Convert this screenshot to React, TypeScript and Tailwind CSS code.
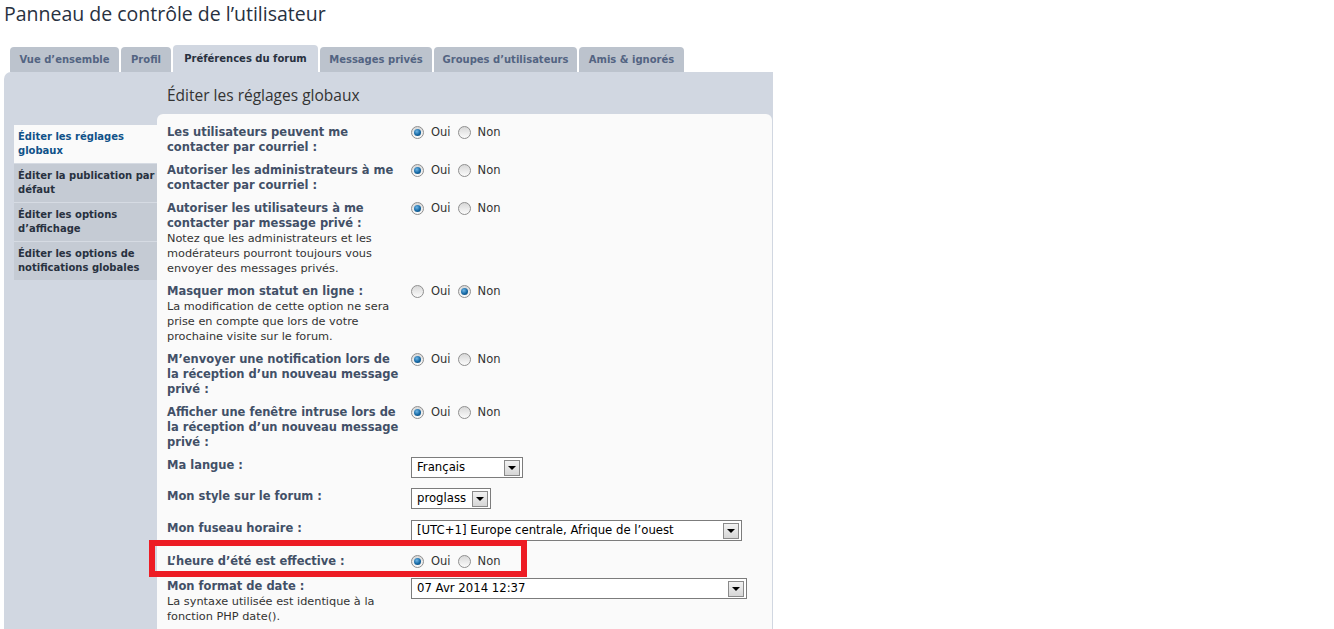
import React from "react";

const tabs = [
	{ label: "Vue d’ensemble", w: "w-[109px]" },
	{ label: "Profil", w: "w-[50px]" },
	{ label: "Préférences du forum", w: "w-[145px]", active: true },
	{ label: "Messages privés", w: "w-[112px]" },
	{ label: "Groupes d’utilisateurs", w: "w-[143px]" },
	{ label: "Amis & ignorés", w: "w-[105px]" },
];

const menu = [
	{ label: "Éditer les réglages globaux", active: true },
	{ label: "Éditer la publication par défaut" },
	{ label: "Éditer les options d’affichage" },
	{ label: "Éditer les options de notifications globales" },
];

type RadioRow = { kind: "radio"; label: string; explain?: string; yes: boolean };
type SelectRow = { kind: "select"; label: string; explain?: string; value: string; w: string; h: string; lpt: string; spt: string };
type Row = RadioRow | SelectRow;

const rows: Row[] = [
	{ kind: "radio", label: "Les utilisateurs peuvent me contacter par courriel :", yes: true },
	{ kind: "radio", label: "Autoriser les administrateurs à me contacter par courriel :", yes: true },
	{
		kind: "radio",
		label: "Autoriser les utilisateurs à me contacter par message privé :",
		explain: "Notez que les administrateurs et les modérateurs pourront toujours vous envoyer des messages privés.",
		yes: true,
	},
	{
		kind: "radio",
		label: "Masquer mon statut en ligne :",
		explain: "La modification de cette option ne sera prise en compte que lors de votre prochaine visite sur le forum.",
		yes: false,
	},
	{ kind: "radio", label: "M’envoyer une notification lors de la réception d’un nouveau message privé :", yes: true },
	{ kind: "radio", label: "Afficher une fenêtre intruse lors de la réception d’un nouveau message privé :", yes: true },
	{ kind: "select", label: "Ma langue :", value: "Français", w: "w-[112px]", h: "h-[31px]", lpt: "pt-[4px]", spt: "pt-[3px]" },
	{ kind: "select", label: "Mon style sur le forum :", value: "proglass", w: "w-[80px]", h: "h-[32px]", lpt: "pt-[4px]", spt: "pt-[3px]" },
	{ kind: "select", label: "Mon fuseau horaire :", value: "[UTC+1] Europe centrale, Afrique de l’ouest", w: "w-[331px]", h: "h-[33px]", lpt: "pt-[4px]", spt: "pt-[3px]" },
	{ kind: "radio", label: "L’heure d’été est effective :", yes: true },
	{
		kind: "select",
		label: "Mon format de date :",
		explain: "La syntaxe utilisée est identique à la fonction PHP date().",
		value: "07 Avr 2014 12:37",
		w: "w-[336px]",
		h: "h-[60px]",
		lpt: "pt-[6px]",
		spt: "pt-[5px]",
	},
];

function Radio({ checked }: { checked: boolean }) {
	return (
		<span className="w-[13px] h-[13px] rounded-full border border-[#8f8f8f] bg-[linear-gradient(#d8d8d8,#fbfbfb)] flex items-center justify-center shrink-0">
			{checked && <span className="w-[7px] h-[7px] rounded-full bg-[radial-gradient(circle_at_40%_35%,#6fb6e6,#1467a3_55%,#0b3f66)]" />}
		</span>
	);
}

function RadioPair({ yes }: { yes: boolean }) {
	return (
		<div className="flex items-center h-[15px] text-[11.5px] text-[#333]">
			<Radio checked={yes} />
			<span className="ml-[7px]">Oui</span>
			<span className="ml-[7px]"><Radio checked={!yes} /></span>
			<span className="ml-[7px]">Non</span>
		</div>
	);
}

function Select({ value, w }: { value: string; w: string }) {
	return (
		<div className={`${w} h-[21px] border border-[#7c7c7c] bg-white flex items-center justify-between pl-[5px] pr-[2px] text-[11.7px] text-black`}>
			<span className="whitespace-nowrap overflow-hidden">{value}</span>
			<span className="w-[16px] h-[16px] border border-[#8a8a8a] bg-[linear-gradient(#f2f2f2,#d6d6d6)] flex items-center justify-center shrink-0">
				<span className="w-0 h-0 border-l-[4px] border-r-[4px] border-t-[4px] border-l-transparent border-r-transparent border-t-black" />
			</span>
		</div>
	);
}

function Label({ row }: { row: Row }) {
	return (
		<div className="w-[238px] shrink-0 leading-[15px]">
			<div className="font-bold text-[11.5px] text-[#425067]">{row.label}</div>
			{row.explain && <div className="text-[11.3px] text-[#333]">{row.explain}</div>}
		</div>
	);
}

export default function App() {
	return (
		<div className="bg-white w-[1334px] min-h-[629px] overflow-hidden font-['DejaVu_Sans',Verdana,sans-serif] relative">
			<h1 className="h-[45px] pl-[4px] pt-[2px] text-[19.5px] leading-[24px] text-[#28313f] font-['Open_Sans',sans-serif]">
				Panneau de contrôle de l’utilisateur
			</h1>

			<div className="flex items-end gap-[2px] pl-[10px] h-[27px]">
				{tabs.map((t) => (
					<div
						key={t.label}
						className={`${t.w} rounded-t-[4px] flex items-center justify-center font-bold text-[10px] whitespace-nowrap ${
							t.active ? "h-[27px] bg-[#d1d7e1] text-[#28313f]" : "h-[25px] bg-[#bcc3cd] text-[#536482]"
						}`}
					>
						{t.label}
					</div>
				))}
			</div>

			<div className="ml-[4px] w-[769px] bg-[#d1d7e1] rounded-tl-[7px] pr-[1px] pb-[20px]">
				<h2 className="h-[42px] pl-[163px] pt-[13px] text-[15.5px] leading-[20px] text-[#333] font-['Open_Sans',sans-serif]">
					Éditer les réglages globaux
				</h2>
				<div className="flex">
					<ul className="w-[153px] pl-[10px] pt-[11px] shrink-0 flex flex-col">
						{menu.map((m, i) => (
							<li
								key={m.label}
								className={`pl-[4px] pr-0 py-[5px] leading-[14px] text-[10px] font-bold ${
									m.active ? "bg-[#fafafa] text-[#105289]" : "bg-[#c5cbd4] text-[#28313f]"
								} ${i > 0 ? "border-t border-[#d6dbe3]" : ""} ${i === 0 ? "h-[38px]" : "h-[39px]"}`}
							>
								{m.label}
							</li>
						))}
					</ul>
					<div className="flex-1 bg-[#fafafa] rounded-t-[6px] pl-[10px] pt-[7px] pb-[20px]">
						{rows.map((r) =>
							r.kind === "radio" ? (
								<div key={r.label} className="flex py-[4px]">
									<Label row={r} />
									<div className="pl-[6px]">
										<RadioPair yes={r.yes} />
									</div>
								</div>
							) : (
								<div key={r.label} className={`flex ${r.h}`}>
									<div className={r.lpt}>
										<Label row={r} />
									</div>
									<div className={`pl-[6px] ${r.spt}`}>
										<Select value={r.value} w={r.w} />
									</div>
								</div>
							),
						)}
					</div>
				</div>
			</div>

			<div className="absolute left-[149px] top-[540px] w-[378px] h-[37px] border-[6px] border-[#ed1c24] pointer-events-none" />
		</div>
	);
}
